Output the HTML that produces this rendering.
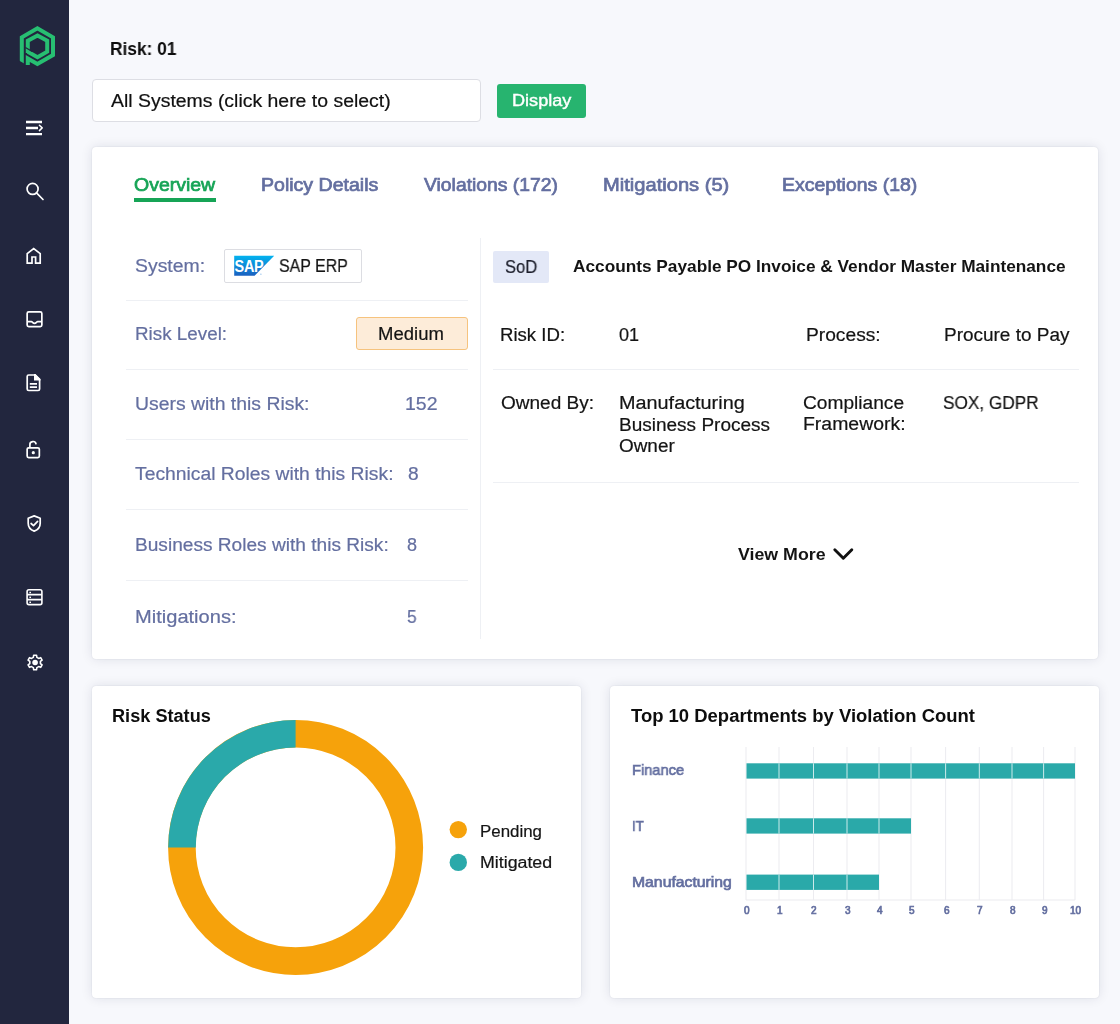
<!DOCTYPE html>
<html><head><meta charset="utf-8"><style>
*{margin:0;padding:0;box-sizing:border-box}
html,body{width:1120px;height:1024px;overflow:hidden;background:#f7f8fc;font-family:"Liberation Sans",sans-serif}
.t{position:absolute;line-height:1;white-space:nowrap;transform-origin:0 0;will-change:transform}
.abs{position:absolute}
.card{position:absolute;background:#fff;border-radius:4px;box-shadow:0 0 1.5px rgba(20,25,60,.12),0 0 12px rgba(20,25,60,.11)}
.hl{position:absolute;height:1px;background:#eef0f4}
</style></head><body>
<div class="abs" style="left:0;top:0;width:69px;height:1024px;background:#22263e"></div>
<svg class="abs" style="left:0;top:0" width="69" height="700" viewBox="0 0 69 700">
 <g fill="none" stroke="#27bf72" stroke-width="4" stroke-linejoin="miter">
  <path d="M21.8 64 V37.3 L37.4 28.3 L53 37.3 V55 L37.4 64 L27.8 58.45 V65"/>
  <path d="M27.8 53 V40.8 L37.5 35.5 L47.2 40.8 V51.7 L37.5 57.2 L27.8 51.66"/>
 </g>
 <path d="M18 59.9 L24.6 63.7 V68 H18Z" fill="#22263e"/>
 <path d="M25.4 47.55 L32.2 51.5" stroke="#22263e" stroke-width="1.25" fill="none"/>
 <g fill="none" stroke="#fff" stroke-width="1.7">
  <path d="M26 122H42M26 128H38M26 134.1H42" stroke-width="2.3"/>
  <path d="M39.4 125.3L42.2 127.9L39.4 130.6" stroke-width="1.5" stroke-linecap="round" stroke-linejoin="round"/>
  <circle cx="32.6" cy="188.9" r="5.5"/><path d="M36.5 192.8L43 199.5" stroke-linecap="round"/>
  <path d="M27.2 263.1V253.6L33.7 248.5L40.2 253.6V263.1H35.6V257H32V263.1Z" stroke-linejoin="miter"/>
  <rect x="27.15" y="311.85" width="14.7" height="14.7" rx="1.6"/><path d="M27.2 321.6H31.4C32.4 321.6 32.8 323.3 34.5 323.3C36.2 323.3 36.6 321.6 37.6 321.6H41.8"/>
  <path d="M27.2 376.5A1.5 1.5 0 0 1 28.7 375H35L39.6 379.6V389A1.5 1.5 0 0 1 38.1 390.5H28.7A1.5 1.5 0 0 1 27.2 389Z"/>
  <path d="M29.8 383.8H37M29.8 387.2H37"/>
  <rect x="27.15" y="447.8" width="12.2" height="9.75" rx="1.5"/><path d="M29.9 447.8V445A3.1 3.1 0 0 1 36.1 444.3"/>
  <path d="M34.2 515.9L40.2 518.2V523.3C40.2 527.3 37.6 530 34.2 531.1C30.8 530 28.2 527.3 28.2 523.3V518.2Z" stroke-linejoin="round"/><path d="M31.1 523.5L33.5 525.6L37.6 521.3" stroke-linecap="round" stroke-linejoin="round"/>
  <rect x="27.1" y="589.8" width="14.8" height="14.8" rx="1.8" stroke-width="1.6"/><path d="M27 594.6H42M27 599.6H42" stroke-width="1.6"/>
  <path d="M33.34 657.39 L33.69 655.24 L36.51 655.24 L36.86 657.39 L38.64 658.42 L40.68 657.65 L42.10 660.09 L40.40 661.47 L40.40 663.53 L42.10 664.91 L40.68 667.35 L38.64 666.58 L36.86 667.61 L36.51 669.76 L33.69 669.76 L33.34 667.61 L31.56 666.58 L29.52 667.35 L28.10 664.91 L29.80 663.53 L29.80 661.47 L28.10 660.09 L29.52 657.65 L31.56 658.42Z" stroke-width="1.6" stroke-linejoin="round"/>
 </g>
 <path d="M34 374.1H35.5L40.5 379.1V380.5H34Z" fill="#fff"/>
 <circle cx="33.3" cy="452.7" r="1.6" fill="#fff"/>
 <rect x="29.4" y="591.8" width="1.6" height="1.4" fill="#fff"/><rect x="29.4" y="596.6" width="1.6" height="1.4" fill="#fff"/><rect x="29.4" y="601.6" width="1.6" height="1.4" fill="#fff"/>
 <circle cx="35.1" cy="662.5" r="2.8" fill="#fff"/>
</svg>

<div class="abs" style="left:92px;top:79px;width:389px;height:43px;background:#fff;border:1px solid #dddee4;border-radius:4px"></div>
<div class="abs" style="left:497px;top:83.5px;width:89px;height:34.2px;background:#27b46f;border-radius:3px"></div>

<div class="card" style="left:92px;top:147px;width:1006px;height:512px"></div>
<div class="abs" style="left:134px;top:198px;width:82px;height:4px;background:#16a456"></div>
<div class="abs" style="left:224px;top:249px;width:138px;height:34px;border:1px solid #dcdde2;border-radius:2px;background:#fff"></div>
<svg class="abs" style="left:0;top:0" width="1120" height="700">
 <defs><linearGradient id="sg" x1="0" y1="0" x2="0" y2="1"><stop offset="0" stop-color="#02b3ef"/><stop offset="1" stop-color="#1a60c0"/></linearGradient></defs>
 <path d="M234.2 255.8H274.2L254.6 275.7H234.2Z" fill="url(#sg)"/>
 <text x="234.6" y="271.9" font-family="Liberation Sans" font-weight="700" font-size="17" fill="#fff" transform="translate(234.6 0) scale(0.85 1) translate(-234.6 0)" letter-spacing="-0.4">SAP</text>
 <circle cx="260.9" cy="274.2" r=".6" fill="#7fb4e6"/>
 <path d="M834.8 549.8L843.3 558.3L851.8 549.8" fill="none" stroke="#111" stroke-width="2.9" stroke-linecap="round" stroke-linejoin="round"/>
</svg>
<div class="abs" style="left:356px;top:317px;width:112px;height:33px;background:#fdecd9;border:1px solid #f6c37e;border-radius:3px"></div>
<div class="hl" style="left:126px;top:299.5px;width:342px"></div>
<div class="hl" style="left:126px;top:368.5px;width:342px"></div>
<div class="hl" style="left:126px;top:439px;width:342px"></div>
<div class="hl" style="left:126px;top:508.5px;width:342px"></div>
<div class="hl" style="left:126px;top:580px;width:342px"></div>
<div class="abs" style="left:480px;top:238px;width:1px;height:401px;background:#eef0f4"></div>
<div class="abs" style="left:493px;top:250.5px;width:56px;height:32px;background:#e3e8f7;border-radius:2px"></div>
<div class="hl" style="left:493px;top:368.5px;width:586px"></div>
<div class="hl" style="left:493px;top:481.5px;width:586px"></div>

<div class="card" style="left:92px;top:686px;width:489px;height:312px"></div>
<div class="card" style="left:610px;top:686px;width:489px;height:312px"></div>
<svg class="abs" style="left:0;top:0" width="1120" height="1024">
 <circle cx="295.6" cy="847.4" r="113.7" fill="none" stroke="#f6a20b" stroke-width="27.6"/>
 <path d="M295.6 720 A127.4 127.4 0 0 0 168.2 847.4 H195.8 A99.8 99.8 0 0 1 295.6 747.6 Z" fill="#2aa9aa"/>
 <circle cx="458.3" cy="829.6" r="8.7" fill="#f6a20b"/>
 <circle cx="458.3" cy="862.4" r="8.7" fill="#2aa9aa"/>
 <rect x="745.5" y="747" width="1" height="153" fill="#ececf0"/><rect x="778.5" y="747" width="1" height="153" fill="#ececf0"/><rect x="813.0" y="747" width="1" height="153" fill="#ececf0"/><rect x="846.5" y="747" width="1" height="153" fill="#ececf0"/><rect x="878.5" y="747" width="1" height="153" fill="#ececf0"/><rect x="910.5" y="747" width="1" height="153" fill="#ececf0"/><rect x="945.1" y="747" width="1" height="153" fill="#ececf0"/><rect x="978.8" y="747" width="1" height="153" fill="#ececf0"/><rect x="1011.5" y="747" width="1" height="153" fill="#ececf0"/><rect x="1043.1" y="747" width="1" height="153" fill="#ececf0"/><rect x="1074.5" y="747" width="1" height="153" fill="#ececf0"/><rect x="746" y="899.5" width="329" height="1" fill="#ececf0"/><rect x="746.5" y="763.3" width="328.5" height="15.3" fill="#2aa9a9"/><rect x="778.5" y="763.3" width="1" height="15.3" fill="#e9f6f6" opacity="0.85"/><rect x="813.0" y="763.3" width="1" height="15.3" fill="#e9f6f6" opacity="0.85"/><rect x="846.5" y="763.3" width="1" height="15.3" fill="#e9f6f6" opacity="0.85"/><rect x="878.5" y="763.3" width="1" height="15.3" fill="#e9f6f6" opacity="0.85"/><rect x="910.5" y="763.3" width="1" height="15.3" fill="#e9f6f6" opacity="0.85"/><rect x="945.1" y="763.3" width="1" height="15.3" fill="#e9f6f6" opacity="0.85"/><rect x="978.8" y="763.3" width="1" height="15.3" fill="#e9f6f6" opacity="0.85"/><rect x="1011.5" y="763.3" width="1" height="15.3" fill="#e9f6f6" opacity="0.85"/><rect x="1043.1" y="763.3" width="1" height="15.3" fill="#e9f6f6" opacity="0.85"/><rect x="746.5" y="818.3" width="164.5" height="15.3" fill="#2aa9a9"/><rect x="778.5" y="818.3" width="1" height="15.3" fill="#e9f6f6" opacity="0.85"/><rect x="813.0" y="818.3" width="1" height="15.3" fill="#e9f6f6" opacity="0.85"/><rect x="846.5" y="818.3" width="1" height="15.3" fill="#e9f6f6" opacity="0.85"/><rect x="878.5" y="818.3" width="1" height="15.3" fill="#e9f6f6" opacity="0.85"/><rect x="746.5" y="874.6" width="132.5" height="15.3" fill="#2aa9a9"/><rect x="778.5" y="874.6" width="1" height="15.3" fill="#e9f6f6" opacity="0.85"/><rect x="813.0" y="874.6" width="1" height="15.3" fill="#e9f6f6" opacity="0.85"/><rect x="846.5" y="874.6" width="1" height="15.3" fill="#e9f6f6" opacity="0.85"/>
</svg>
<div class="t" style="left:109.80px;top:40.46px;font-size:18px;color:#0d0d0d;font-weight:700;transform:scaleX(0.9624);">Risk: 01</div>
<div class="t" style="left:111.00px;top:91.66px;font-size:18px;color:#111;-webkit-text-stroke:0.2px #111;transform:scaleX(1.0795);">All Systems (click here to select)</div>
<div class="t" style="left:512.20px;top:92.11px;font-size:17px;color:#fff;-webkit-text-stroke:0.4px #fff;transform:scaleX(1.0659);">Display</div>
<div class="t" style="left:134.00px;top:175.76px;font-size:18px;color:#16a456;-webkit-text-stroke:0.7px #16a456;transform:scaleX(1.0823);">Overview</div>
<div class="t" style="left:261.00px;top:175.76px;font-size:18px;color:#646fa0;-webkit-text-stroke:0.7px #646fa0;transform:scaleX(1.0860);">Policy Details</div>
<div class="t" style="left:424.00px;top:175.76px;font-size:18px;color:#646fa0;-webkit-text-stroke:0.7px #646fa0;transform:scaleX(1.0741);">Violations (172)</div>
<div class="t" style="left:603.00px;top:175.76px;font-size:18px;color:#646fa0;-webkit-text-stroke:0.7px #646fa0;transform:scaleX(1.1173);">Mitigations (5)</div>
<div class="t" style="left:782.00px;top:175.76px;font-size:18px;color:#646fa0;-webkit-text-stroke:0.7px #646fa0;transform:scaleX(1.0822);">Exceptions (18)</div>
<div class="t" style="left:134.70px;top:256.56px;font-size:18px;color:#646fa0;-webkit-text-stroke:0.2px #646fa0;transform:scaleX(1.0785);">System:</div>
<div class="t" style="left:279.00px;top:257.06px;font-size:18px;color:#141414;-webkit-text-stroke:0.2px #141414;transform:scaleX(0.8848);">SAP ERP</div>
<div class="t" style="left:134.60px;top:325.06px;font-size:18px;color:#646fa0;-webkit-text-stroke:0.2px #646fa0;transform:scaleX(1.0459);">Risk Level:</div>
<div class="t" style="left:378.20px;top:325.06px;font-size:18px;color:#141414;-webkit-text-stroke:0.2px #141414;transform:scaleX(1.0286);">Medium</div>
<div class="t" style="left:134.60px;top:394.86px;font-size:18px;color:#646fa0;-webkit-text-stroke:0.2px #646fa0;transform:scaleX(1.0767);">Users with this Risk:</div>
<div class="t" style="left:405.00px;top:394.86px;font-size:18px;color:#646fa0;-webkit-text-stroke:0.2px #646fa0;transform:scaleX(1.0836);">152</div>
<div class="t" style="left:134.60px;top:465.46px;font-size:18px;color:#646fa0;-webkit-text-stroke:0.2px #646fa0;transform:scaleX(1.0722);">Technical Roles with this Risk:</div>
<div class="t" style="left:408.40px;top:465.46px;font-size:18px;color:#646fa0;-webkit-text-stroke:0.2px #646fa0;transform:scaleX(1.0635);">8</div>
<div class="t" style="left:134.60px;top:536.16px;font-size:18px;color:#646fa0;-webkit-text-stroke:0.2px #646fa0;transform:scaleX(1.0612);">Business Roles with this Risk:</div>
<div class="t" style="left:407.00px;top:536.16px;font-size:18px;color:#646fa0;-webkit-text-stroke:0.2px #646fa0;">8</div>
<div class="t" style="left:134.60px;top:607.86px;font-size:18px;color:#646fa0;-webkit-text-stroke:0.2px #646fa0;transform:scaleX(1.1151);">Mitigations:</div>
<div class="t" style="left:407.00px;top:607.86px;font-size:18px;color:#646fa0;-webkit-text-stroke:0.2px #646fa0;transform:scaleX(0.9639);">5</div>
<div class="t" style="left:504.60px;top:257.56px;font-size:18px;color:#1b1d2a;-webkit-text-stroke:0.2px #1b1d2a;transform:scaleX(0.9202);">SoD</div>
<div class="t" style="left:572.80px;top:258.11px;font-size:17px;color:#141414;font-weight:700;transform:scaleX(1.0144);">Accounts Payable PO Invoice &amp; Vendor Master Maintenance</div>
<div class="t" style="left:500.40px;top:325.56px;font-size:18px;color:#141414;-webkit-text-stroke:0.2px #141414;transform:scaleX(1.0328);">Risk ID:</div>
<div class="t" style="left:619.00px;top:325.56px;font-size:18px;color:#141414;-webkit-text-stroke:0.2px #141414;transform:scaleX(1.0025);">01</div>
<div class="t" style="left:806.40px;top:325.86px;font-size:18px;color:#141414;-webkit-text-stroke:0.2px #141414;transform:scaleX(1.0663);">Process:</div>
<div class="t" style="left:944.15px;top:325.86px;font-size:18px;color:#141414;-webkit-text-stroke:0.2px #141414;transform:scaleX(1.0537);">Procure to Pay</div>
<div class="t" style="left:500.80px;top:394.36px;font-size:18px;color:#141414;-webkit-text-stroke:0.2px #141414;transform:scaleX(1.0570);">Owned By:</div>
<div class="t" style="left:619.20px;top:394.36px;font-size:18px;color:#141414;-webkit-text-stroke:0.2px #141414;transform:scaleX(1.1019);">Manufacturing</div>
<div class="t" style="left:619.20px;top:415.56px;font-size:18px;color:#141414;-webkit-text-stroke:0.2px #141414;transform:scaleX(1.0560);">Business Process</div>
<div class="t" style="left:619.20px;top:436.66px;font-size:18px;color:#141414;-webkit-text-stroke:0.2px #141414;transform:scaleX(1.0509);">Owner</div>
<div class="t" style="left:803.30px;top:393.96px;font-size:18px;color:#141414;-webkit-text-stroke:0.2px #141414;transform:scaleX(1.0632);">Compliance</div>
<div class="t" style="left:803.30px;top:415.26px;font-size:18px;color:#141414;-webkit-text-stroke:0.2px #141414;transform:scaleX(1.0795);">Framework:</div>
<div class="t" style="left:942.85px;top:393.96px;font-size:18px;color:#141414;-webkit-text-stroke:0.2px #141414;transform:scaleX(0.9560);">SOX, GDPR</div>
<div class="t" style="left:738.20px;top:546.11px;font-size:17px;color:#141414;font-weight:700;transform:scaleX(1.0453);">View More</div>
<div class="t" style="left:112.00px;top:706.66px;font-size:18px;color:#0d0d0d;font-weight:700;transform:scaleX(1.0082);">Risk Status</div>
<div class="t" style="left:480.40px;top:823.66px;font-size:16px;color:#141414;-webkit-text-stroke:0.2px #141414;transform:scaleX(1.0549);">Pending</div>
<div class="t" style="left:480.40px;top:854.96px;font-size:16px;color:#141414;-webkit-text-stroke:0.2px #141414;transform:scaleX(1.1114);">Mitigated</div>
<div class="t" style="left:630.80px;top:706.76px;font-size:18px;color:#0d0d0d;font-weight:700;transform:scaleX(1.0257);">Top 10 Departments by Violation Count</div>
<div class="t" style="left:631.60px;top:762.40px;font-size:15px;color:#646fa0;-webkit-text-stroke:0.7px #646fa0;transform:scaleX(0.9764);">Finance</div>
<div class="t" style="left:631.70px;top:818.20px;font-size:15px;color:#646fa0;-webkit-text-stroke:0.7px #646fa0;transform:scaleX(0.8856);">IT</div>
<div class="t" style="left:631.60px;top:874.40px;font-size:15px;color:#646fa0;-webkit-text-stroke:0.7px #646fa0;transform:scaleX(1.0496);">Manufacturing</div>
<div class="t" style="left:743.90px;top:906.43px;font-size:10px;color:#646fa0;-webkit-text-stroke:0.7px #646fa0;">0</div>
<div class="t" style="left:776.90px;top:906.43px;font-size:10px;color:#646fa0;-webkit-text-stroke:0.7px #646fa0;">1</div>
<div class="t" style="left:811.40px;top:906.43px;font-size:10px;color:#646fa0;-webkit-text-stroke:0.7px #646fa0;">2</div>
<div class="t" style="left:844.90px;top:906.43px;font-size:10px;color:#646fa0;-webkit-text-stroke:0.7px #646fa0;">3</div>
<div class="t" style="left:876.90px;top:906.43px;font-size:10px;color:#646fa0;-webkit-text-stroke:0.7px #646fa0;">4</div>
<div class="t" style="left:908.90px;top:906.43px;font-size:10px;color:#646fa0;-webkit-text-stroke:0.7px #646fa0;">5</div>
<div class="t" style="left:943.50px;top:906.43px;font-size:10px;color:#646fa0;-webkit-text-stroke:0.7px #646fa0;">6</div>
<div class="t" style="left:977.20px;top:906.43px;font-size:10px;color:#646fa0;-webkit-text-stroke:0.7px #646fa0;">7</div>
<div class="t" style="left:1009.90px;top:906.43px;font-size:10px;color:#646fa0;-webkit-text-stroke:0.7px #646fa0;">8</div>
<div class="t" style="left:1041.50px;top:906.43px;font-size:10px;color:#646fa0;-webkit-text-stroke:0.7px #646fa0;">9</div>
<div class="t" style="left:1069.90px;top:906.43px;font-size:10px;color:#646fa0;-webkit-text-stroke:0.7px #646fa0;">10</div>
</body></html>
